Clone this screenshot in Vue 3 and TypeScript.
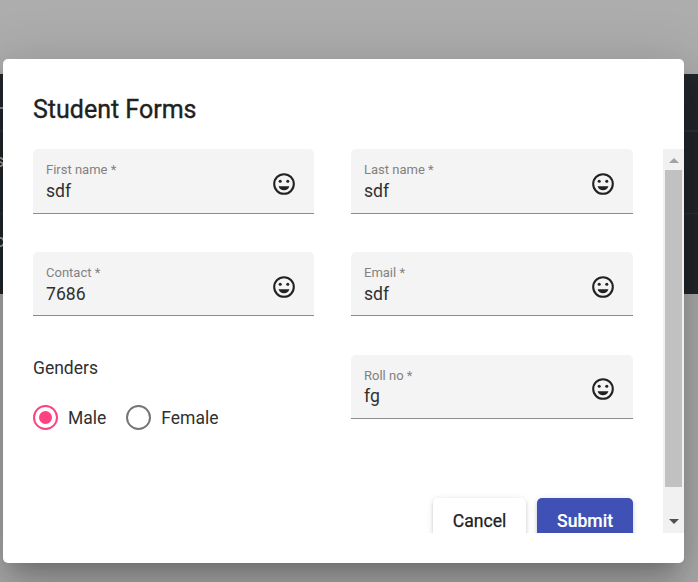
<script setup lang="ts">
import { ref } from 'vue'

interface Field {
  id: string
  label: string
  value: string
}

const fields = ref<Field[]>([
  { id: 'first', label: 'First name *', value: 'sdf' },
  { id: 'last', label: 'Last name *', value: 'sdf' },
  { id: 'contact', label: 'Contact *', value: '7686' },
  { id: 'email', label: 'Email *', value: 'sdf' },
  { id: 'roll', label: 'Roll no *', value: 'fg' },
])
const genders = ['Male', 'Female']
const gender = ref('Male')
</script>

<template>
  <div class="page">
    <div class="table">
      <div class="trow first"><i class="dash"></i></div>
      <div class="trow"><span>s</span></div>
      <div class="trow last"><span>c</span></div>
    </div>
    <div class="overlay">
      <section class="dialog" role="dialog">
        <h2>Student Forms</h2>
        <div class="content">
          <form class="form" @submit.prevent>
            <div class="grid">
              <template v-for="f in fields" :key="f.id">
                <div v-if="f.id === 'roll'" class="genders">
                  <div class="caption">Genders</div>
                  <div class="radios">
                    <label v-for="g in genders" :key="g" class="radio" @click="gender = g">
                      <span class="ring" :class="{ on: gender === g }"></span>
                      <span>{{ g }}</span>
                    </label>
                  </div>
                </div>
                <div class="field" :class="f.id">
                  <div class="text">
                    <label>{{ f.label }}</label>
                    <div class="value">{{ f.value }}</div>
                  </div>
                  <svg class="face" viewBox="0 0 24 24">
                    <path fill-rule="evenodd" d="M12 2a10 10 0 1 0 0 20a10 10 0 0 0 0-20zm0 18.1a8.1 8.1 0 1 1 0-16.2a8.1 8.1 0 0 1 0 16.2z" />
                    <circle cx="8.5" cy="9.4" r="1.4" />
                    <circle cx="15.5" cy="9.4" r="1.4" />
                    <path d="M12 17.8c2.33 0 4.3-1.6 5-3.8H7c.7 2.2 2.67 3.8 5 3.8z" />
                  </svg>
                </div>
              </template>
            </div>
            <div class="actions">
              <button type="button" class="btn">Cancel</button>
              <button type="submit" class="btn primary">Submit</button>
            </div>
          </form>
          <div class="scrollbar">
            <svg class="arrow" viewBox="0 0 10 5"><path d="M0 5L5 0L10 5z" fill="#a3a3a3" /></svg>
            <div class="thumb"></div>
            <svg class="arrow" viewBox="0 0 10 5"><path d="M0 0L5 5L10 0z" fill="#505050" /></svg>
          </div>
        </div>
      </section>
    </div>
  </div>
</template>

<style>
body {
  margin: 0;
  overflow: hidden;
}
</style>

<style scoped>
* {
  box-sizing: border-box;
}
.page {
  position: relative;
  width: 698px;
  height: 582px;
  padding-top: 74px;
  overflow: hidden;
  background: #adadad;
  font-family: Roboto, 'Liberation Sans', sans-serif;
  color: #212121;
}
.table {
  height: 220px;
  background: #22272c;
}
.trow {
  height: 82px;
  padding-top: 18px;
  border-bottom: 1px solid #2e3236;
  color: #adadad;
  font-size: 18px;
  line-height: 22px;
}
.trow.first {
  height: 58px;
  padding-top: 33px;
  border-bottom-width: 2px;
}
.trow.last {
  padding-top: 16px;
  border-bottom: 0;
}
.trow span {
  display: block;
  margin-left: -5px;
}
.dash {
  display: block;
  width: 4px;
  height: 2px;
  background: #85888a;
}
.overlay {
  position: absolute;
  inset: 0;
  padding: 59px 14px 19px 3px;
}
.dialog {
  width: 681px;
  height: 504px;
  padding: 31px 0 30px;
  border-radius: 5px;
  background: #fff;
  box-shadow:
    0 14px 19px -9px rgba(0, 0, 0, 0.2),
    0 31px 49px 4px rgba(0, 0, 0, 0.14),
    0 12px 59px 10px rgba(0, 0, 0, 0.12);
}
h2 {
  margin: 0 0 19px 30px;
  font-size: 25px;
  font-weight: 400;
  -webkit-text-stroke: 0.35px #212121;
  line-height: 40px;
}
.content {
  display: flex;
  justify-content: space-between;
  height: 384px;
  padding-left: 30px;
  overflow: hidden;
}
.form {
  width: 602px;
}
.grid {
  display: grid;
  grid-template-columns: 281px 281.5px;
  grid-auto-rows: 65px;
  gap: 38px 37px;
}
.field {
  display: flex;
  justify-content: space-between;
  align-items: flex-start;
  height: 64px;
  padding: 12px 17px 0 13px;
  border-bottom: 1px solid #8c8c8c;
  border-radius: 5px 5px 0 0;
  background: #f4f4f4;
}
.field.first,
.field.last {
  height: 65px;
}
.text label {
  display: block;
  color: #828282;
  font-size: 13px;
  font-weight: 400;
  line-height: 17px;
}
.value {
  padding-top: 1px;
  color: #303030;
  font-size: 17.6px;
  font-weight: 400;
  line-height: 24px;
}
.roll .value {
  padding-top: 0;
}
.face {
  width: 26px;
  height: 26px;
  margin-top: 10px;
  fill: #212121;
}
.roll .face {
  margin-top: 9px;
}
.genders {
  color: #303030;
  font-size: 17.5px;
  font-weight: 400;
  line-height: 24px;
}
.caption {
  margin-top: 1px;
}
.radios {
  display: flex;
  gap: 20px;
  margin-top: 25px;
}
.radio {
  display: flex;
  align-items: center;
  gap: 10px;
}
.ring {
  display: flex;
  align-items: center;
  justify-content: center;
  width: 25px;
  height: 25px;
  border: 2px solid #757575;
  border-radius: 50%;
}
.ring.on {
  border-color: #ff4081;
}
.ring.on::after {
  content: '';
  width: 13px;
  height: 13px;
  border-radius: 50%;
  background: #ff4081;
}
.actions {
  display: flex;
  justify-content: flex-end;
  gap: 11px;
  margin-top: 78px;
  padding-right: 2px;
}
.btn {
  width: 93px;
  height: 46px;
  padding: 0;
  border: 0;
  border-radius: 5px;
  background: #fff;
  box-shadow:
    0 4px 1px -3px rgba(0, 0, 0, 0.2),
    0 2px 3px 0 rgba(0, 0, 0, 0.14),
    0 1px 6px 0 rgba(0, 0, 0, 0.12);
  color: #212121;
  font-family: inherit;
  font-size: 17.6px;
  font-weight: 400;
  -webkit-text-stroke: 0.25px #212121;
}
.btn.primary {
  width: 96px;
  background: #3f51b5;
  color: #fff;
  font-weight: 500;
  -webkit-text-stroke: 0.15px #fff;
}
.scrollbar {
  display: flex;
  flex-direction: column;
  align-items: center;
  width: 21px;
  height: 384px;
  background: #f1f1f1;
}
.arrow {
  width: 10px;
  height: 5px;
  margin: 9px 0 7px;
}
.thumb {
  width: 17px;
  height: 317px;
  background: #c1c1c1;
}
.thumb + .arrow {
  margin: 32px 0 0;
}
</style>
